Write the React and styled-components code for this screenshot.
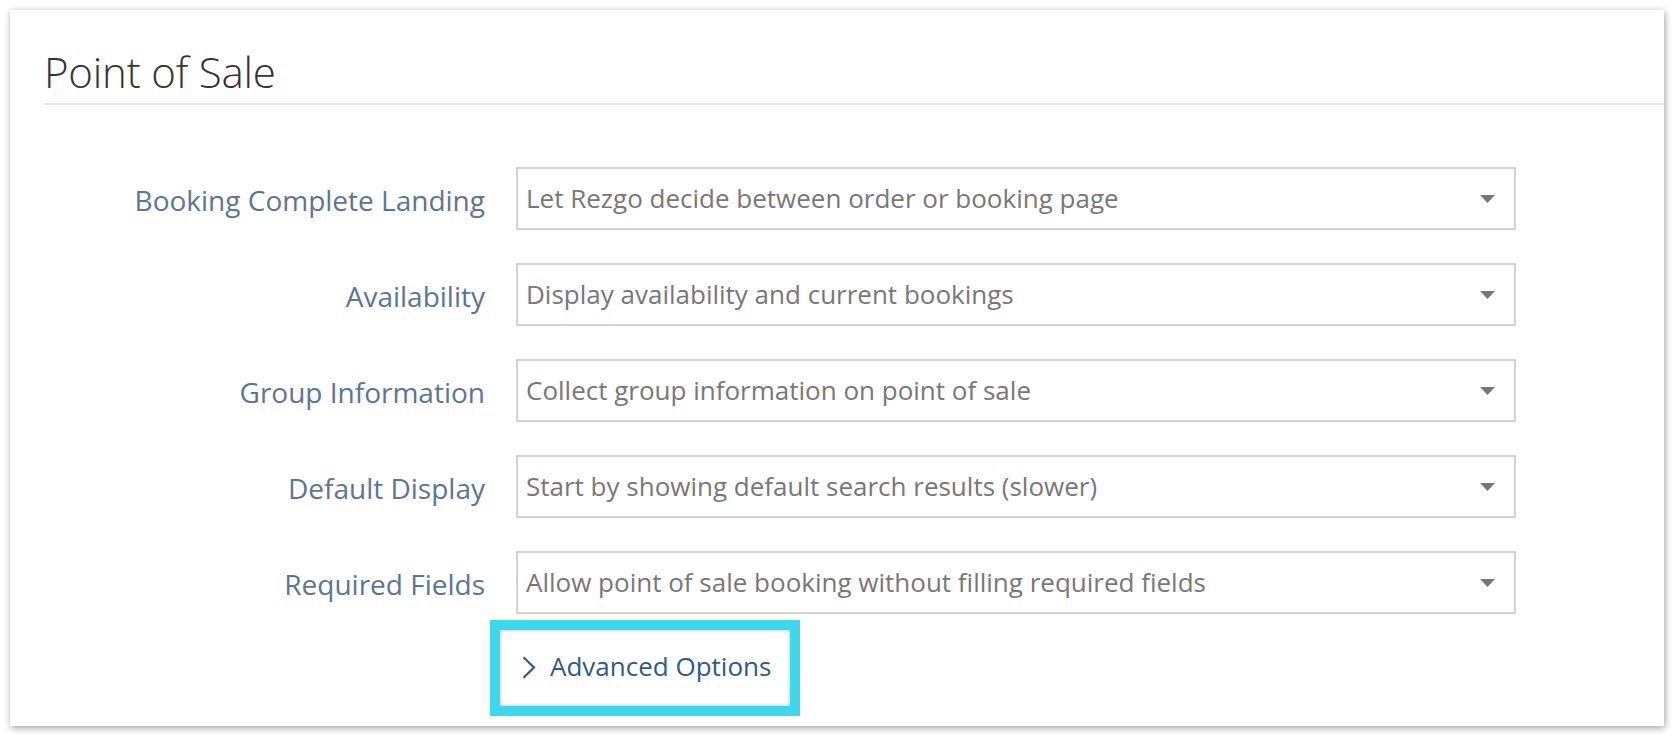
import React from "react";
import styled, { createGlobalStyle } from "styled-components";

const GlobalStyle = createGlobalStyle`
  html, body {
    margin: 0;
    padding: 0;
    background: #ffffff;
  }
  body {
    font-family: "Open Sans", "Liberation Sans", Arial, sans-serif;
  }
  * { box-sizing: border-box; }
`;

const Page = styled.div`
  padding: 10px;
  width: 1674px;
`;

const Card = styled.section`
  background: #ffffff;
  width: 1654px;
  padding: 33px 0 10px 34px;
  box-shadow: 1px 2px 7px rgba(0, 0, 0, 0.38);
`;

const Header = styled.header`
  padding-bottom: 3px;
  border-bottom: 2px solid #e6e6e6;
  margin-bottom: 62px;
`;

const Title = styled.h1`
  margin: 0;
  font-family: "Open Sans", "Liberation Sans", sans-serif;
  font-weight: 300;
  font-size: 42px;
  line-height: 57px;
  color: #333333;
  letter-spacing: -0.2px;
`;

const Form = styled.div`
  display: grid;
  grid-template-columns: 441px 1000px;
  column-gap: 31px;
  row-gap: 33px;
  align-items: center;
`;

const Label = styled.label`
  justify-self: end;
  font-size: 28px;
  line-height: 38px;
  color: #5b7597;
  padding-top: 3px;
`;

const SelectBox = styled.div`
  height: 63px;
  border: 2px solid #d3d3d3;
  background: #fff;
  display: flex;
  align-items: center;
  justify-content: space-between;
  padding: 0 19px 0 8px;
`;

const SelectText = styled.span`
  font-size: 26px;
  color: #777777;
  line-height: 35px;
`;

const Caret = styled.svg`
  width: 15px;
  height: 8px;
  flex: none;
  margin-top: 1px;
`;

const Spacer = styled.div``;

const Highlight = styled.div`
  margin-top: -27px;
  margin-left: -26px;
  width: 310px;
  border: 10px solid #3ed8ec;
  background: #fff;
`;

const AdvancedButton = styled.button`
  width: 100%;
  height: 76px;
  border: none;
  background: #fff;
  box-shadow: inset 0 0 4px rgba(0, 0, 0, 0.28);
  display: flex;
  align-items: center;
  gap: 14px;
  padding: 0 0 4px 22px;
  font-family: "Open Sans", "Liberation Sans", sans-serif;
  font-size: 26px;
  color: #2b5b8b;
  cursor: pointer;
`;

const Chevron = styled.svg`
  width: 14px;
  height: 23px;
  flex: none;
  margin-top: 3px;
`;

const rows = [
  ["Booking Complete Landing", "Let Rezgo decide between order or booking page"],
  ["Availability", "Display availability and current bookings"],
  ["Group Information", "Collect group information on point of sale"],
  ["Default Display", "Start by showing default search results (slower)"],
  ["Required Fields", "Allow point of sale booking without filling required fields"],
];

export default function App() {
  return (
    <>
      <GlobalStyle />
      <Page>
        <Card>
          <Header>
            <Title>Point of Sale</Title>
          </Header>
          <Form>
            {rows.map(([label, value]) => (
              <React.Fragment key={label}>
                <Label>{label}</Label>
                <SelectBox role="combobox">
                  <SelectText>{value}</SelectText>
                  <Caret viewBox="0 0 15 8">
                    <path d="M0 0 H15 L7.5 8 Z" fill="#777" />
                  </Caret>
                </SelectBox>
              </React.Fragment>
            ))}
            <Spacer />
            <Highlight>
              <AdvancedButton type="button">
                <Chevron viewBox="0 0 14 23">
                  <path
                    d="M1.5 1.2 L12 11.5 L1.5 21.8"
                    fill="none"
                    stroke="#2b5b8b"
                    strokeWidth="2.2"
                  />
                </Chevron>
                Advanced Options
              </AdvancedButton>
            </Highlight>
          </Form>
        </Card>
      </Page>
    </>
  );
}
